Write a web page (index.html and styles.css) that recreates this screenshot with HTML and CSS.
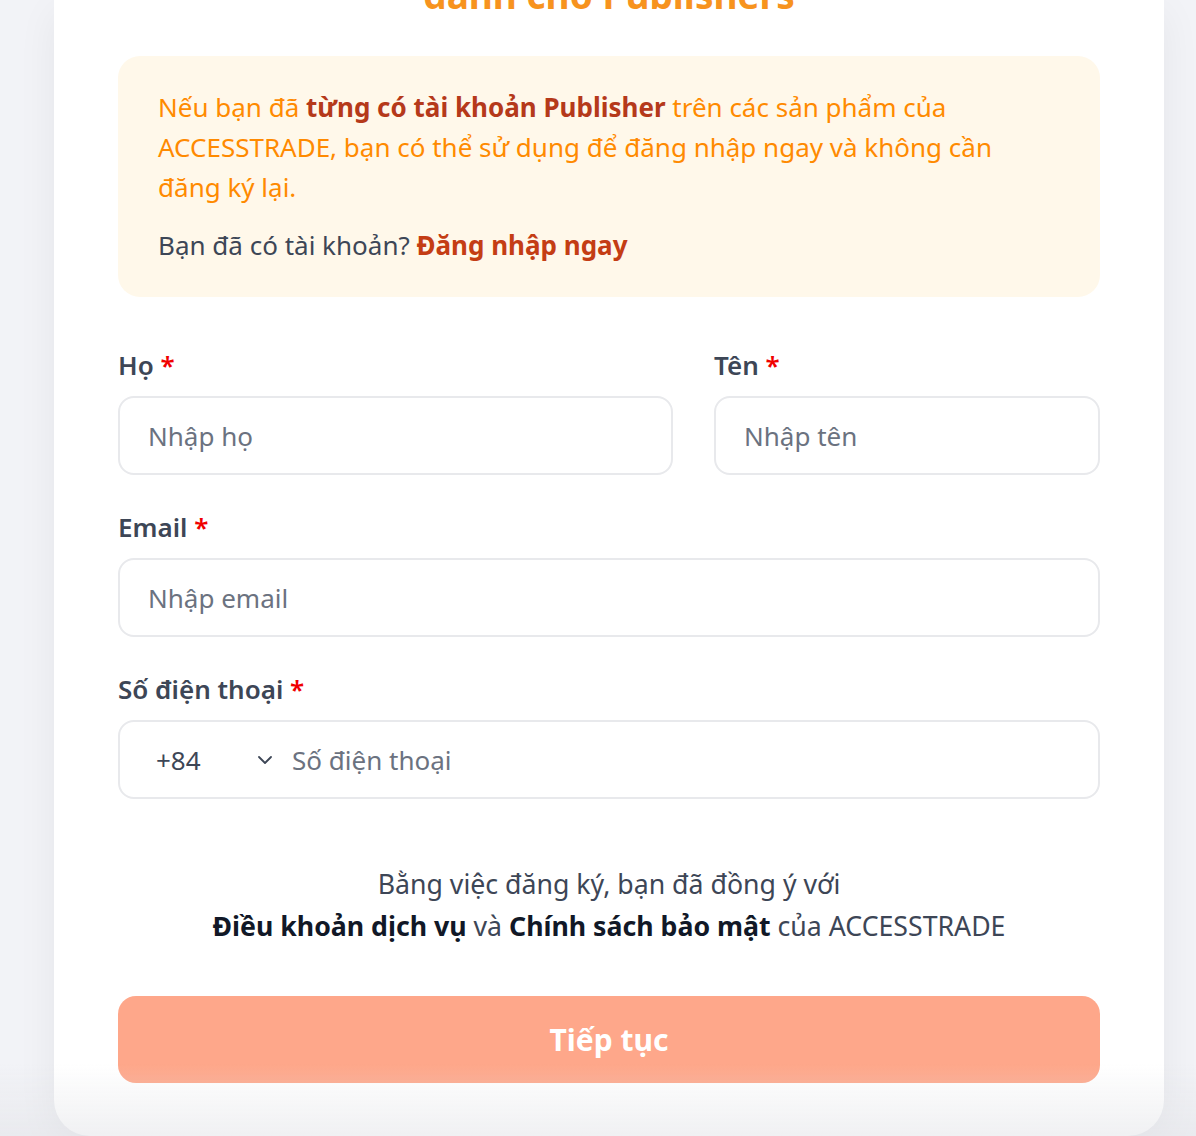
FILE: index.html
```html
<!DOCTYPE html>
<html lang="vi">
<head>
<meta charset="utf-8">
<title>Đăng ký Publisher</title>
<link rel="stylesheet" href="styles.css">
</head>
<body>
<div class="page">
  <main class="card">
    <h1 class="title">dành cho Publishers</h1>
    <section class="notice">
      <p class="notice-text">Nếu bạn đã <strong>từng có tài khoản Publisher</strong> trên các sản phẩm của ACCESSTRADE, bạn có thể sử dụng để đăng nhập ngay và không cần đăng ký lại.</p>
      <p class="notice-login">Bạn đã có tài khoản? <a class="login-link" href="#">Đăng nhập ngay</a></p>
    </section>
    <form class="form">
      <div class="row-2">
        <div class="field">
          <label class="label">Họ <span class="req">*</span></label>
          <div class="input"><span class="ph">Nhập họ</span></div>
        </div>
        <div class="field">
          <label class="label">Tên <span class="req">*</span></label>
          <div class="input"><span class="ph">Nhập tên</span></div>
        </div>
      </div>
      <div class="field">
        <label class="label">Email <span class="req">*</span></label>
        <div class="input"><span class="ph">Nhập email</span></div>
      </div>
      <div class="field">
        <label class="label">Số điện thoại <span class="req">*</span></label>
        <div class="input phone">
          <span class="code">+84</span>
          <svg class="chev" width="16" height="10" viewBox="0 0 16 10"><path d="M2 2 L8 8 L14 2" fill="none" stroke="#3d4656" stroke-width="1.8" stroke-linecap="round" stroke-linejoin="round"/></svg>
          <span class="ph">Số điện thoại</span>
        </div>
      </div>
      <p class="terms">Bằng việc đăng ký, bạn đã đồng ý với<br><strong>Điều khoản dịch vụ</strong> và <strong>Chính sách bảo mật</strong> của ACCESSTRADE</p>
      <button type="button" class="submit">Tiếp tục</button>
    </form>
  </main>
</div>
<div class="bottom-fade"></div>
</body>
</html>
```

FILE: styles.css
```css
* { box-sizing: border-box; }
html, body {
  margin: 0;
  padding: 0;
  height: 100%;
  overflow: hidden;
  background: #f2f3f7;
  font-family: "Noto Sans", "Open Sans", sans-serif;
}
.page {
  display: flex;
  justify-content: center;
  padding: 0 32px 0 54px;
}
.card {
  width: 1110px;
  background: #fff;
  border-radius: 0 0 36px 36px;
  padding: 0 64px 53px;
  box-shadow: 0 12px 40px rgba(0,0,0,0.06);
}
.title {
  margin: -30px 0 36px;
  text-align: center;
  font-size: 37px;
  line-height: 50px;
  font-weight: 700;
  color: #f7931e;
}
.notice {
  background: #fff8ea;
  border-radius: 22px;
  padding: 31px 40px 32px;
}
.notice p { margin: 0; }
.notice-text {
  color: #ff8a00;
  font-size: 26px;
  line-height: 40px;
}
.notice-text strong { color: #b5391a; font-weight: 700; }
.notice-login {
  margin-top: 18px !important;
  color: #3d4656;
  font-size: 26px;
  line-height: 40px;
}
.login-link {
  color: #c43d14;
  font-weight: 700;
  text-decoration: none;
}
.form {
  display: flex;
  flex-direction: column;
  gap: 32px;
  margin-top: 48px;
}
.row-2 {
  display: grid;
  grid-template-columns: 555px 1fr;
  gap: 41px;
}
.field {
  display: flex;
  flex-direction: column;
  gap: 11px;
}
.label {
  font-size: 26px;
  line-height: 40px;
  font-weight: 600;
  color: #3d4656;
}
.req { color: #f00000; }
.input {
  height: 79px;
  border: 2px solid #e8e9ec;
  border-radius: 16px;
  display: flex;
  align-items: center;
  padding: 0 28px;
  font-size: 26px;
}
.ph { color: #6b7280; }
.phone { padding-left: 36px; }
.code { color: #3d4656; width: 101px; }
.chev { margin-right: 19px; }
.terms {
  margin: 32px 0 0;
  text-align: center;
  font-size: 26.7px;
  line-height: 42px;
  color: #3d4656;
}
.terms strong { color: #111827; font-weight: 700; }
.submit {
  margin-top: 17px;
  height: 87px;
  border: none;
  border-radius: 18px;
  background: #fea78a;
  color: #fff;
  font-family: inherit;
  font-size: 30px;
  font-weight: 700;
}
.bottom-fade {
  position: fixed;
  left: 0;
  right: 0;
  bottom: 0;
  height: 72px;
  background: linear-gradient(to bottom, rgba(225,226,230,0), rgba(225,226,230,0.5));
  pointer-events: none;
}
```
